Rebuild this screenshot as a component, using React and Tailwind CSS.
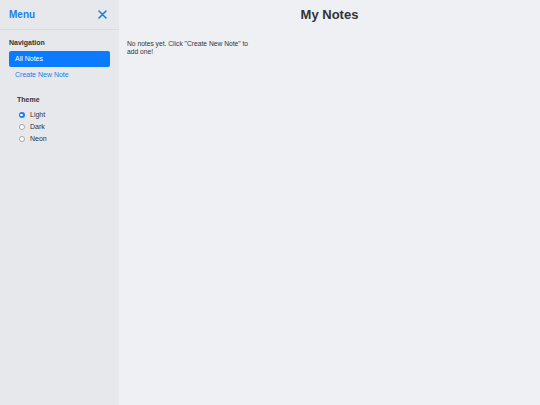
import React from "react";

function Radio({ checked, label }) {
  return (
    <label className="flex items-center h-[12px]">
      <span
        className={
          checked
            ? "ml-[1.5px] w-[6px] h-[6px] rounded-full bg-[#1a7cf0] flex items-center justify-center"
            : "ml-[1.5px] w-[6px] h-[6px] rounded-full border-[0.75px] border-[#a5a5ab] bg-white"
        }
      >
        {checked && <span className="w-[2.4px] h-[2.4px] rounded-full bg-white" />}
      </span>
      <span className="ml-[5.5px] text-[7px] leading-[8px] text-[#333]">{label}</span>
    </label>
  );
}

export default function App() {
  return (
    <div
      className="flex w-full h-screen bg-[#eff0f4] text-[#333]"
      style={{ fontFamily: '"Liberation Sans", Arial, sans-serif' }}
    >
      <aside className="w-[119px] shrink-0 bg-[#e7e8ec] flex flex-col">
        <div className="h-[30px] flex items-center justify-between pl-[9px] pr-[12px] border-b border-[#d9dadf]">
          <span className="text-[10px] leading-[12px] font-bold text-[#1a80e8]">Menu</span>
          <svg width="9" height="9" viewBox="0 0 9 9" className="text-[#1a80e8]">
            <path d="M1 1 L8 8 M8 1 L1 8" stroke="currentColor" strokeWidth="1.6" strokeLinecap="round" />
          </svg>
        </div>
        <div className="px-[9px] pt-[8px]">
          <div className="text-[7px] leading-[9px] font-bold text-[#333]">Navigation</div>
          <div className="mt-[4px] h-[16px] rounded-[2px] bg-[#0a7bff] flex items-center px-[6px] text-[7px] text-white">
            All Notes
          </div>
          <div className="h-[16px] flex items-center px-[6px] text-[7px] text-[#1a80e8]">
            Create New Note
          </div>
        </div>
        <div className="px-[17px] pt-[12px]">
          <div className="text-[7px] leading-[10px] font-bold text-[#333]">Theme</div>
          <div className="mt-[4px] flex flex-col">
            <Radio checked label="Light" />
            <Radio label="Dark" />
            <Radio label="Neon" />
          </div>
        </div>
      </aside>
      <main className="flex-1 flex flex-col">
        <h1 className="pt-[7px] text-center text-[13px] leading-[16px] font-bold text-[#333]">My Notes</h1>
        <p className="mt-[17px] ml-[8px] w-[132px] text-[6.7px] leading-[7.6px] text-[#333]">
          No notes yet. Click "Create New Note" to add one!
        </p>
      </main>
    </div>
  );
}
